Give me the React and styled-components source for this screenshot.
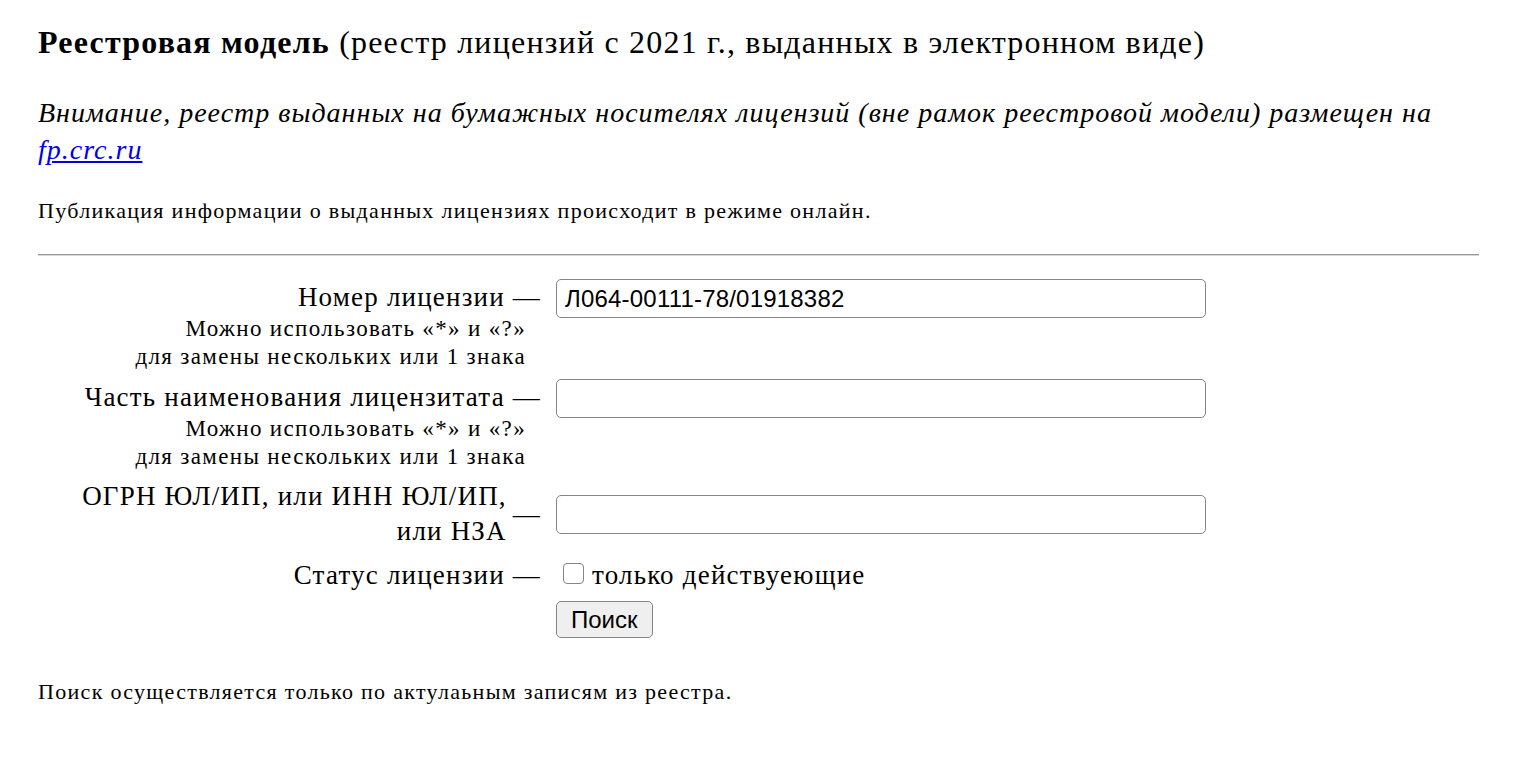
import React, { useState } from 'react';
import styled, { createGlobalStyle } from 'styled-components';

const GlobalStyle = createGlobalStyle`
  body {
    margin: 0;
    background: #fff;
    color: #000;
    font-family: "Liberation Serif", "Times New Roman", serif;
  }
`;

const hint = (
  <>
    Можно использовать «*» и «?»
    <br />
    для замены нескольких или 1 знака
  </>
);

function App() {
  const [number, setNumber] = useState('Л064-00111-78/01918382');
  const [name, setName] = useState('');
  const [ogrn, setOgrn] = useState('');
  const [active, setActive] = useState(false);

  return (
    <Page>
      <GlobalStyle />
      <Title>
        <b>Реестровая модель</b> (реестр лицензий с 2021 г., выданных в электронном виде)
      </Title>
      <Notice>
        Внимание, реестр выданных на бумажных носителях лицензий (вне рамок реестровой модели) размещен на{' '}
        <a href="#fp">fp.crc.ru</a>
      </Notice>
      <Text>Публикация информации о выданных лицензиях происходит в режиме онлайн.</Text>
      <Rule />

      <Form onSubmit={e => e.preventDefault()}>
        <Label>
          Номер лицензии —
          <Hint>{hint}</Hint>
        </Label>
        <Field>
          <Input value={number} onChange={e => setNumber(e.target.value)} />
        </Field>

        <Label>
          Часть наименования лицензитата —
          <Hint>{hint}</Hint>
        </Label>
        <Field>
          <Input value={name} onChange={e => setName(e.target.value)} />
        </Field>

        <Label>
          <Multi>
            <span>
              ОГРН ЮЛ/ИП, или ИНН ЮЛ/ИП,
              <br />
              или НЗА
            </span>
            <span>—</span>
          </Multi>
        </Label>
        <Field $middle>
          <Input value={ogrn} onChange={e => setOgrn(e.target.value)} />
        </Field>

        <Label>Статус лицензии —</Label>
        <Field>
          <Check>
            <input type="checkbox" checked={active} onChange={e => setActive(e.target.checked)} />
            только действуеющие
          </Check>
        </Field>

        <span />
        <Field>
          <Button type="submit">Поиск</Button>
        </Field>
      </Form>

      <Text $gap={41}>Поиск осуществляется только по актулаьным записям из реестра.</Text>
    </Page>
  );
}

const Page = styled.div`
  padding: 23px 41px 0 38px;
`;

const Title = styled.h3`
  font-size: 32px;
  line-height: 38px;
  letter-spacing: 1.2px;
  font-weight: normal;
  margin: 0;

  b {
    font-weight: bold;
  }
`;

const Notice = styled.p`
  font-style: italic;
  font-size: 28px;
  line-height: 37px;
  letter-spacing: 1px;
  margin: 33px 0 0;

  a {
    color: #0000ee;
  }
`;

const Text = styled.p`
  font-size: 22px;
  line-height: 26px;
  letter-spacing: 1.3px;
  margin: ${p => p.$gap || 30}px 0 0;
`;

const Rule = styled.hr`
  margin: 30px 0 0;
  height: 0;
  border: none;
  border-top: 1px solid #9a9a9a;
  border-bottom: 1px solid #d6d6d6;
`;

const Form = styled.form`
  display: grid;
  grid-template-columns: 503px 650px;
  column-gap: 15px;
  row-gap: 8px;
  margin-top: 23px;
`;

const Label = styled.div`
  text-align: right;
  font-size: 27px;
  line-height: 36px;
  letter-spacing: 1.2px;
`;

const Multi = styled.div`
  display: flex;
  justify-content: flex-end;
  align-items: center;
  gap: 6px;
  line-height: 35px;
`;

const Hint = styled.div`
  font-size: 23px;
  line-height: 28px;
  letter-spacing: 1.35px;
  margin-right: 15px;
`;

const Field = styled.div`
  align-self: ${p => (p.$middle ? 'center' : 'start')};
  display: flex;
  align-items: center;
`;

const Input = styled.input`
  width: 650px;
  height: 39px;
  box-sizing: border-box;
  border: 1.5px solid #858585;
  border-radius: 5px;
  padding: 0 8px;
  font-family: "Liberation Sans", Arial, sans-serif;
  font-size: 24px;
  letter-spacing: 0.2px;
  color: #000;
  background: #fff;
  outline: none;
`;

const Check = styled.label`
  display: flex;
  align-items: center;
  font-size: 27px;
  line-height: 36px;
  letter-spacing: 1.2px;

  input {
    appearance: none;
    box-sizing: border-box;
    width: 21px;
    height: 21px;
    margin: 0 8px 0 7px;
    border: 1.5px solid #858585;
    border-radius: 4px;
    background: #fff;
    position: relative;
    top: -2px;
  }

  input:checked {
    background: #0a66d8;
    border-color: #0a66d8;
  }
`;

const Button = styled.button`
  font-family: "Liberation Sans", Arial, sans-serif;
  font-size: 24px;
  color: #000;
  padding: 0 14px;
  height: 37px;
  background: #efefef;
  border: 1.5px solid #858585;
  border-radius: 5px;
`;

export default App;
